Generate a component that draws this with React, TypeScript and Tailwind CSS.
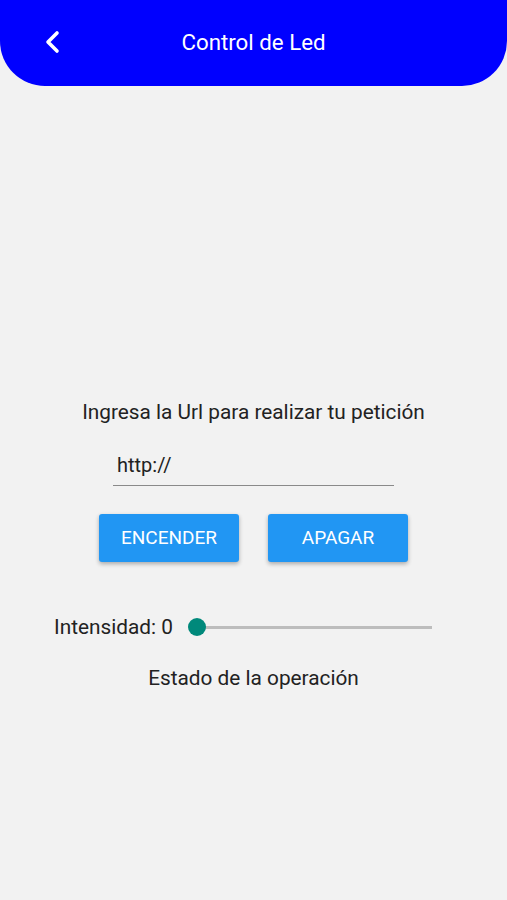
import { useState } from 'react';

// Android-style LED control screen

export default function App() {
  const [url, setUrl] = useState('http://');
  const [intensity] = useState(0);

  return (
    <div
      className="min-h-[900px] bg-[#f2f2f2] text-[#222222]"
      style={{ fontFamily: 'Roboto, "Noto Sans", sans-serif' }}
    >
      {/* Header */}
      <header className="relative flex h-[86px] items-center justify-center rounded-b-[45px] bg-[#0000ff]">
        <button className="absolute left-[40px] top-[26px] flex h-[32px] w-[24px] items-center justify-center">
          <svg width="16" height="24" viewBox="0 0 16 24" fill="none">
            <path
              d="M13 3 L4 12 L13 21"
              stroke="#ffffff"
              strokeWidth="3.6"
              strokeLinecap="round"
              strokeLinejoin="round"
            />
          </svg>
        </button>
        <h1 className="mt-[-2px] text-[22.3px] leading-[28px] text-white">Control de Led</h1>
      </header>

      {/* Content */}
      <main className="flex flex-col items-center pt-[314px]">
        <p className="text-[20.8px] leading-[24px]">Ingresa la Url para realizar tu petición</p>

        <div className="mt-[20px] w-[281px] border-b-[1.5px] border-[#8a8a8a] pl-[4px]">
          <input
            value={url}
            onChange={(e) => setUrl(e.target.value)}
            className="h-[41px] w-full bg-transparent text-[20px] text-[#222222] outline-none"
          />
        </div>

        <div className="mt-[28px] flex gap-[29px]">
          <button className="h-[48px] w-[140px] rounded-[3px] bg-[#2196f3] text-[19px] text-white shadow-[0_2px_4px_rgba(0,0,0,0.3)]">
            ENCENDER
          </button>
          <button className="h-[48px] w-[140px] rounded-[3px] bg-[#2196f3] text-[19px] text-white shadow-[0_2px_4px_rgba(0,0,0,0.3)]">
            APAGAR
          </button>
        </div>

        <div className="mt-[53px] flex items-center self-start pl-[54px]">
          <span className="text-[20.8px] leading-[24px]">Intensidad: {intensity}</span>
          <div className="relative ml-[15px] h-[24px] w-[244px]">
            <div className="absolute left-[9px] right-0 top-[11px] h-[3px] bg-[#bdbdbd]" />
            <div className="absolute left-0 top-[3px] h-[18px] w-[18px] rounded-full bg-[#00897b]" />
          </div>
        </div>

        <p className="mt-[27px] text-[20.8px] leading-[24px]">Estado de la operación</p>
      </main>
    </div>
  );
}
